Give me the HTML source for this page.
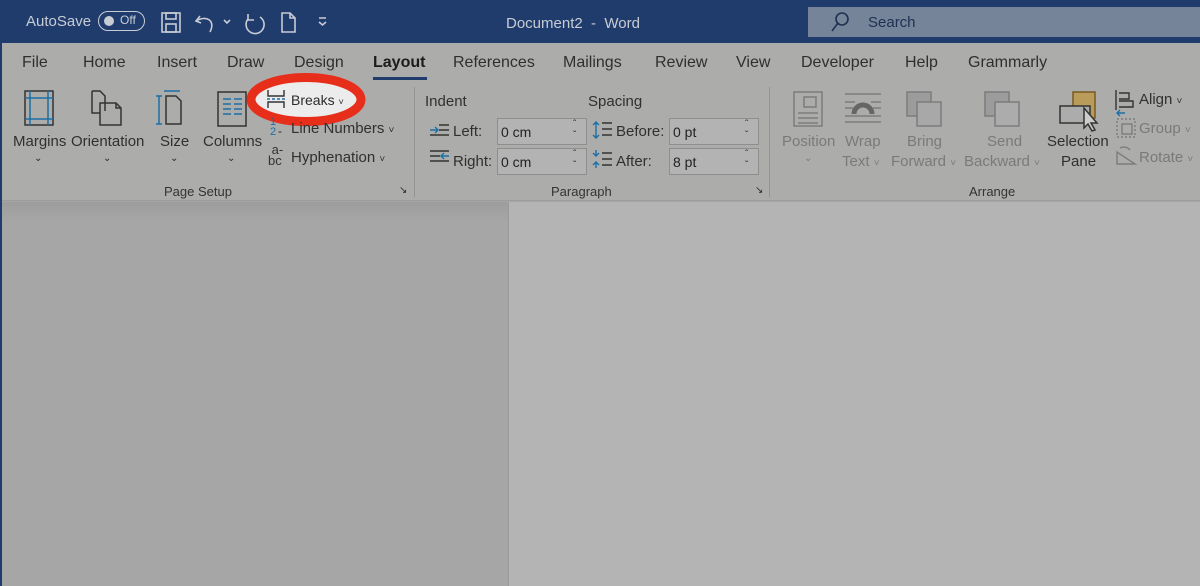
<!DOCTYPE html>
<html><head><meta charset="utf-8"><style>
*{margin:0;padding:0;box-sizing:border-box}
body{width:1200px;height:586px;overflow:hidden;position:relative;background:#a6a6a6;font-family:"Liberation Sans",sans-serif;color:#2b2b2b}
.a{position:absolute;white-space:nowrap}
#tb{left:0;top:0;width:1200px;height:43px;background:#1f3c6d}
#rib{left:2px;top:43px;width:1198px;height:158px;background:#acacab;border-bottom:1px solid #9c9c9c}
.tab{font-size:16px;top:54px;color:#2f2f2f}
.lbl{font-size:15px;color:#303030}
.sm{font-size:13px;color:#333}
.dis{color:#7a7a7a}
.box{position:absolute;background:#b3b3b3;border:1px solid #8e8e8e;height:27px;font-size:14px;padding:5px 0 0 3px;color:#222}
.sep{position:absolute;width:1px;background:#939393}
.chev{font-size:10px}
</style></head><body>
<div id="tb" class="a"></div>
<div class="a" style="left:0;top:43px;width:2px;height:543px;background:#1f3c6d"></div>
<div class="a" style="left:26px;top:13px;font-size:15px;color:#c8ccd4">AutoSave</div>
<div class="a" style="left:98px;top:11px;width:47px;height:20px;border:1.5px solid #c8ccd4;border-radius:10px"></div>
<div class="a" style="left:104px;top:16px;width:10px;height:10px;border-radius:5px;background:#c8ccd4"></div>
<div class="a" style="left:120px;top:13px;font-size:12px;color:#c8ccd4">Off</div>
<svg class="a" style="left:160px;top:10px" width="180" height="26" stroke="#c8ccd4" stroke-width="1.6" fill="none">
<rect x="2" y="3" width="18" height="19"/><rect x="6" y="3" width="10" height="6"/><rect x="6" y="14" width="10" height="8"/>
<path d="M40 6 L36 11 L41 13 M36 11 C46 5 56 10 50 22"/><path d="M64 10 l3 3 l3 -3"/>
<path d="M100 7 A9 9 0 1 1 88 9 M88 4 v6 h6" /><path d="M122 3 h8 l5 5 v14 h-13 z M130 3 v5 h5"/>
<path d="M159 8 h7 M159 12 l3.5 3 l3.5 -3"/>
</svg>
<div class="a" style="left:506px;top:15px;font-size:15px;color:#c8ccd4">Document2 &nbsp;- &nbsp;Word</div>
<div class="a" style="left:808px;top:7px;width:392px;height:30px;background:#76849a"></div>
<svg class="a" style="left:830px;top:11px" width="20" height="22" stroke="#1f2f4f" stroke-width="1.6" fill="none"><circle cx="12" cy="8" r="6"/><path d="M8 12 L2 20"/></svg>
<div class="a" style="left:868px;top:14px;font-size:15px;color:#1f2f4f">Search</div>
<div id="rib" class="a"></div>
<div class="a tab" style="left:22px">File</div>
<div class="a tab" style="left:83px">Home</div>
<div class="a tab" style="left:157px">Insert</div>
<div class="a tab" style="left:227px">Draw</div>
<div class="a tab" style="left:294px">Design</div>
<div class="a tab" style="left:373px;color:#1c1c1c;font-weight:bold">Layout</div>
<div class="a" style="left:373px;top:77px;width:54px;height:3px;background:#1f3c6d"></div>
<div class="a tab" style="left:453px">References</div>
<div class="a tab" style="left:563px">Mailings</div>
<div class="a tab" style="left:655px">Review</div>
<div class="a tab" style="left:736px">View</div>
<div class="a tab" style="left:801px">Developer</div>
<div class="a tab" style="left:905px">Help</div>
<div class="a tab" style="left:968px">Grammarly</div>
<svg class="a" style="left:20px;top:88px" width="200" height="40" fill="none" stroke-width="1.5">
<rect x="5" y="3" width="28" height="34" stroke="#333"/><path d="M10 3v34M28 3v34M5 10h28M5 31h28" stroke="#1c6fa6"/>
<path d="M72 3h8l5 5v15" stroke="#333"/><path d="M72 3v22h8" stroke="#333"/><path d="M80 15h16l5 5v17h-21z M96 15v5h5" stroke="#333"/>
<path d="M144 3h16M139 8v28M136 8h6M136 36h6" stroke="#1c6fa6"/><path d="M146 8h10l5 5v23h-15z" stroke="#333"/>
</svg>
<svg class="a" style="left:216px;top:90px" width="34" height="38" fill="none" stroke-width="1.5"><rect x="2" y="2" width="28" height="34" stroke="#333"/><path d="M7 9h8M7 14h8M7 19h8M7 24h8M18 9h8M18 14h8M18 19h8M18 24h8" stroke="#1c6fa6"/></svg>
<div class="a lbl" style="left:13px;top:133px">Margins</div>
<div class="a lbl" style="left:71px;top:133px">Orientation</div>
<div class="a lbl" style="left:160px;top:133px">Size</div>
<div class="a lbl" style="left:203px;top:133px">Columns</div>
<div class="a chev" style="left:34px;top:153px">&#8964;</div>
<div class="a chev" style="left:103px;top:153px">&#8964;</div>
<div class="a chev" style="left:170px;top:153px">&#8964;</div>
<div class="a chev" style="left:227px;top:153px">&#8964;</div>
<svg class="a" style="left:246px;top:73px" width="120" height="53"><ellipse cx="60" cy="26.5" rx="55" ry="22" fill="#ececec" stroke="#e62e1b" stroke-width="9"/></svg>
<svg class="a" style="left:266px;top:89px" width="22" height="20" fill="none" stroke-width="1.4"><path d="M2 1v6h16V1M2 19v-6h16v6" stroke="#333"/><path d="M1 10h3M6 10h3M11 10h3M16 10h3" stroke="#1c6fa6"/></svg>
<div class="a" style="left:291px;top:92px;font-size:14px;color:#2b2b2b">Breaks <span style="font-size:9px">&#709;</span></div>
<div class="a" style="left:270px;top:117px;font-size:11px;color:#1c6fa6;line-height:10px">1<br>2</div>
<div class="a" style="left:278px;top:124px;font-size:12px">-</div>
<div class="a lbl" style="left:291px;top:120px">Line Numbers <span class="chev">&#709;</span></div>
<div class="a" style="left:268px;top:144px;font-size:13px;line-height:11px;color:#333">&nbsp;a-<br>bc</div>
<div class="a lbl" style="left:291px;top:149px">Hyphenation <span class="chev">&#709;</span></div>
<div class="a sm" style="left:164px;top:184px">Page Setup</div>
<div class="a" style="left:399px;top:185px;font-size:10px">&#8600;</div>
<div class="sep" style="left:414px;top:87px;height:110px"></div>
<div class="a lbl" style="left:425px;top:93px">Indent</div>
<div class="a lbl" style="left:588px;top:93px">Spacing</div>
<svg class="a" style="left:429px;top:122px" width="22" height="48" fill="none" stroke-width="1.4"><path d="M10 3h10M10 8h10M1 13h19M1 29h19M1 34h10M1 39h19" stroke="#333"/><path d="M1 8h7M6 5l3 3l-3 3" stroke="#1c6fa6"/><path d="M12 34h8M15 31l-3 3l3 3" stroke="#1c6fa6"/></svg>
<div class="a lbl" style="left:453px;top:123px">Left:</div>
<div class="a lbl" style="left:453px;top:153px">Right:</div>
<div class="box" style="left:497px;top:118px;width:90px">0 cm</div>
<div class="box" style="left:497px;top:148px;width:90px">0 cm</div>
<div class="a" style="left:573px;top:119px;font-size:10px;line-height:11px">&#710;<br>&#711;</div>
<div class="a" style="left:573px;top:149px;font-size:10px;line-height:11px">&#710;<br>&#711;</div>
<svg class="a" style="left:592px;top:120px" width="22" height="50" fill="none" stroke-width="1.4"><path d="M10 3h10M10 9h10M10 15h10M10 33h10M10 39h10M10 45h10" stroke="#333"/><path d="M4 2v16M1 5l3-3l3 3M1 15l3 3l3-3M4 30v6M1 33l3 3l3-3M4 48v-6M1 45l3-3l3 3" stroke="#1c6fa6"/></svg>
<div class="a lbl" style="left:616px;top:123px">Before:</div>
<div class="a lbl" style="left:616px;top:153px">After:</div>
<div class="box" style="left:669px;top:118px;width:90px">0 pt</div>
<div class="box" style="left:669px;top:148px;width:90px">8 pt</div>
<div class="a" style="left:745px;top:119px;font-size:10px;line-height:11px">&#710;<br>&#711;</div>
<div class="a" style="left:745px;top:149px;font-size:10px;line-height:11px">&#710;<br>&#711;</div>
<div class="a sm" style="left:551px;top:184px">Paragraph</div>
<div class="a" style="left:755px;top:185px;font-size:10px">&#8600;</div>
<div class="sep" style="left:769px;top:87px;height:110px"></div>
<svg class="a" style="left:790px;top:88px" width="420" height="50" fill="none" stroke-width="1.5">
<rect x="4" y="4" width="28" height="34" stroke="#7c7c7c"/><path d="M8 25h20M8 30h20M8 35h20" stroke="#7c7c7c"/><rect x="14" y="9" width="12" height="10" stroke="#7c7c7c"/>
<path d="M55 6h36M55 14h10M81 14h10M55 20h8M83 20h8M55 28h36M55 34h36" stroke="#7c7c7c"/><path d="M64 26a9 9 0 0 1 18 0" stroke="#666" stroke-width="5"/>
<rect x="117" y="4" width="24" height="24" fill="#9c9c9c" stroke="#7c7c7c"/><rect x="127" y="14" width="24" height="24" fill="#a8a8a8" stroke="#7c7c7c"/>
<rect x="195" y="4" width="24" height="24" fill="#9c9c9c" stroke="#7c7c7c"/><rect x="205" y="14" width="24" height="24" fill="#acacac" stroke="#7c7c7c"/>
<rect x="283" y="4" width="22" height="26" fill="#b99b5a" stroke="#7a5a20"/><rect x="270" y="18" width="30" height="17" fill="#acacac" stroke="#333"/><path d="M294 20v20l4-4l4 7l3-1l-4-7h6z" fill="#ccc" stroke="#333"/>
</svg>
<div class="a lbl dis" style="left:782px;top:133px">Position</div>
<div class="a lbl dis" style="left:845px;top:133px">Wrap</div>
<div class="a lbl dis" style="left:842px;top:153px">Text <span class="chev">&#709;</span></div>
<div class="a lbl dis" style="left:907px;top:133px">Bring</div>
<div class="a lbl dis" style="left:891px;top:153px">Forward <span class="chev">&#709;</span></div>
<div class="a lbl dis" style="left:987px;top:133px">Send</div>
<div class="a lbl dis" style="left:964px;top:153px">Backward <span class="chev">&#709;</span></div>
<div class="a chev dis" style="left:804px;top:153px">&#8964;</div>
<div class="a lbl" style="left:1047px;top:133px">Selection</div>
<div class="a lbl" style="left:1061px;top:153px">Pane</div>
<svg class="a" style="left:1114px;top:88px" width="24" height="80" fill="none" stroke-width="1.4"><path d="M2 2v20M5 5h10v6H5M5 13h14v6H5" stroke="#333"/><path d="M3 25h8M6 22l-3 3l3 3" stroke="#1c6fa6"/><rect x="8" y="36" width="10" height="10" stroke="#7c7c7c"/><rect x="3" y="31" width="18" height="18" stroke="#7c7c7c" stroke-dasharray="2 2"/><path d="M3 76h18L3 64z M6 60a8 8 0 0 1 10 2" stroke="#7c7c7c"/></svg>
<div class="a lbl" style="left:1139px;top:91px">Align <span class="chev">&#709;</span></div>
<div class="a lbl dis" style="left:1139px;top:120px">Group <span class="chev">&#709;</span></div>
<div class="a lbl dis" style="left:1139px;top:149px">Rotate <span class="chev">&#709;</span></div>
<div class="a sm" style="left:969px;top:184px">Arrange</div>
<div class="a" style="left:2px;top:202px;width:506px;height:20px;background:linear-gradient(#9d9d9d,#a6a6a6)"></div>
<div class="a" style="left:508px;top:202px;width:692px;height:384px;background:#b4b4b4;border-left:1px solid #9a9a9a"></div>
</body></html>
